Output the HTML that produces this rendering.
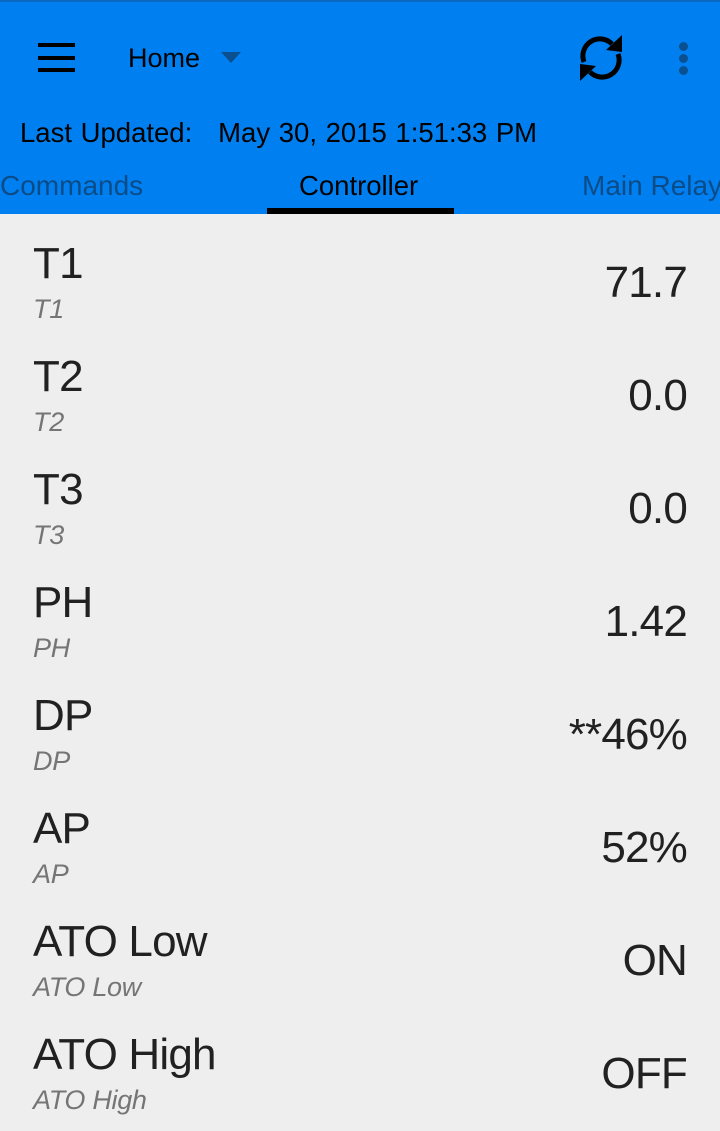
<!DOCTYPE html>
<html><head><meta charset="utf-8"><style>
*{margin:0;padding:0;box-sizing:border-box}
body{width:720px;height:1131px;background:#eeeeee;font-family:"Liberation Sans",sans-serif;position:relative;overflow:hidden}
.hdr{position:absolute;left:0;top:0;width:720px;height:214px;background:#0080f0;border-top:2px solid #0a68c0}
.t{position:absolute;white-space:nowrap;line-height:1}
.row .a{font-size:44px;color:#212121;left:33px;letter-spacing:-0.8px}
.row .b{font-size:27px;color:#757575;font-style:italic;left:33px;letter-spacing:-0.3px}
.row .c{font-size:44px;color:#212121;right:33px;letter-spacing:-0.8px}
</style></head><body>
<div class="hdr">
 <div style="position:absolute;left:38px;top:41px;width:37px;height:4px;background:#000"></div>
 <div style="position:absolute;left:38px;top:54px;width:37px;height:4px;background:#000"></div>
 <div style="position:absolute;left:38px;top:66px;width:37px;height:4px;background:#000"></div>
 <div class="t" style="left:128px;top:43px;font-size:27px;color:#000">Home</div>
 <div style="position:absolute;left:221px;top:50px;border-left:10px solid transparent;border-right:10px solid transparent;border-top:11px solid #0a4f8f"></div>
 <svg style="position:absolute;left:576px;top:30px" width="50" height="52" viewBox="0 0 50 52">
  <path d="M8 30 A17 17 0 0 1 36 12" fill="none" stroke="#000" stroke-width="5"/>
  <path d="M42 22 A17 17 0 0 1 14 40" fill="none" stroke="#000" stroke-width="5"/>
  <polygon points="46,3 46,20 30,18" fill="#000"/>
  <polygon points="4,49 4,32 20,34" fill="#000"/>
 </svg>
 <div style="position:absolute;left:679px;top:40px;width:9px;height:9px;border-radius:50%;background:#0a4f8f"></div>
 <div style="position:absolute;left:679px;top:52px;width:9px;height:9px;border-radius:50%;background:#0a4f8f"></div>
 <div style="position:absolute;left:679px;top:64px;width:9px;height:9px;border-radius:50%;background:#0a4f8f"></div>
 <div class="t" style="left:20px;top:117px;font-size:27.5px;color:#000;word-spacing:1px">Last Updated:&nbsp;&nbsp; May 30, 2015 1:51:33 PM</div>
 <div class="t" style="left:0px;top:170px;font-size:28px;color:#0b4c88">Commands</div>
 <div class="t" style="left:299px;top:170px;font-size:27.5px;color:#000">Controller</div>
 <div class="t" style="left:582px;top:170px;font-size:28px;color:#0b4c88">Main Relay</div>
 <div style="position:absolute;left:267px;top:206px;width:187px;height:6px;background:#000"></div>
</div>
<div class="row">
 <div class="t a" style="top:242px">T1</div><div class="t b" style="top:296px">T1</div><div class="t c" style="top:261px">71.7</div>
 <div class="t a" style="top:355px">T2</div><div class="t b" style="top:409px">T2</div><div class="t c" style="top:374px">0.0</div>
 <div class="t a" style="top:468px">T3</div><div class="t b" style="top:522px">T3</div><div class="t c" style="top:487px">0.0</div>
 <div class="t a" style="top:581px">PH</div><div class="t b" style="top:635px">PH</div><div class="t c" style="top:600px">1.42</div>
 <div class="t a" style="top:694px">DP</div><div class="t b" style="top:748px">DP</div><div class="t c" style="top:713px">**46%</div>
 <div class="t a" style="top:807px">AP</div><div class="t b" style="top:861px">AP</div><div class="t c" style="top:826px">52%</div>
 <div class="t a" style="top:920px">ATO Low</div><div class="t b" style="top:974px">ATO Low</div><div class="t c" style="top:939px">ON</div>
 <div class="t a" style="top:1033px">ATO High</div><div class="t b" style="top:1087px">ATO High</div><div class="t c" style="top:1052px">OFF</div>
</div>
</body></html>
